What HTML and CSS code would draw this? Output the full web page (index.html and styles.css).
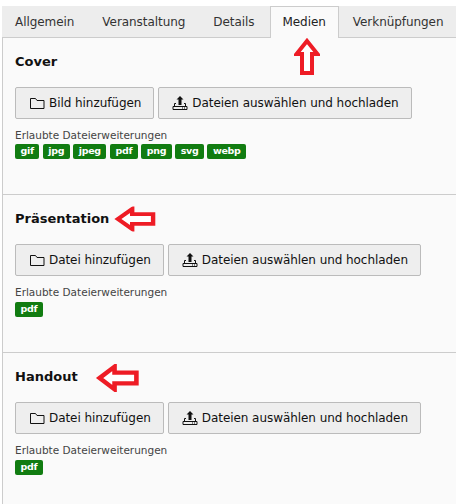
FILE: index.html
```html
<!DOCTYPE html>
<html>
<head>
  <meta charset="UTF-8">
  <link rel="stylesheet" href="styles.css">
</head>
<body>
  <svg width="0" height="0" class="defs">
    <symbol id="icon-folder" viewBox="0 0 16 16">
      <path d="M1.500 13.500v-10h5l1.500 2h7v8z" fill="none" stroke="#111" stroke-width="1"/>
    </symbol>
    <symbol id="icon-upload" viewBox="0 0 16 16">
      <path d="M8 1l3.500 3.500H9.500V10H6.500V4.500H4.500z" fill="#111"/>
      <path d="M4 8.500H2.500V11.500M12 8.500H13.500V11.500M1 11.500H15V14.500H1z" fill="none" stroke="#111"/>
      <path d="M10 13h1M12 13h1" stroke="#111"/>
    </symbol>
    <symbol id="arrow" viewBox="0 0 26 40" preserveAspectRatio="none">
      <path d="M13 4L23.500 17H18V36H8V17H2.500z" fill="#fff" stroke="#ee1c25" stroke-width="4"/>
    </symbol>
  </svg>

  <div class="tabs">
    <a class="tab tab-first">Allgemein</a>
    <a class="tab">Veranstaltung</a>
    <a class="tab tab-details">Details</a>
    <a class="tab active">Medien</a>
    <a class="tab">Verknüpfungen</a>
  </div>

  <div class="panel">
    <section class="group group-cover">
      <h4>Cover</h4>
      <div class="buttons">
        <button><svg class="icon"><use href="#icon-folder"/></svg>Bild hinzufügen</button>
        <button><svg class="icon"><use href="#icon-upload"/></svg>Dateien auswählen und hochladen</button>
      </div>
      <div class="hint">Erlaubte Dateierweiterungen</div>
      <div class="labels">
        <span class="label">gif</span>
        <span class="label">jpg</span>
        <span class="label">jpeg</span>
        <span class="label">pdf</span>
        <span class="label">png</span>
        <span class="label">svg</span>
        <span class="label">webp</span>
      </div>
    </section>

    <section class="group group-talk">
      <h4>Präsentation</h4>
      <div class="buttons">
        <button><svg class="icon"><use href="#icon-folder"/></svg>Datei hinzufügen</button>
        <button><svg class="icon"><use href="#icon-upload"/></svg>Dateien auswählen und hochladen</button>
      </div>
      <div class="hint">Erlaubte Dateierweiterungen</div>
      <div class="labels"><span class="label">pdf</span></div>
    </section>

    <section class="group group-handout">
      <h4>Handout</h4>
      <div class="buttons">
        <button><svg class="icon"><use href="#icon-folder"/></svg>Datei hinzufügen</button>
        <button><svg class="icon"><use href="#icon-upload"/></svg>Dateien auswählen und hochladen</button>
      </div>
      <div class="hint">Erlaubte Dateierweiterungen</div>
      <div class="labels"><span class="label">pdf</span></div>
    </section>
  </div>

  <!-- red marks drawn over the screenshot -->
  <svg class="mark mark-up"><use href="#arrow"/></svg>
  <svg class="mark mark-left mark-talk"><use href="#arrow"/></svg>
  <svg class="mark mark-left mark-handout"><use href="#arrow"/></svg>
</body>
</html>
```

FILE: styles.css
```css
html, body { margin: 0; padding: 0; background: #fff; }
body { position: relative; width: 456px; height: 504px; overflow: hidden; font-family: "DejaVu Sans", Verdana, sans-serif; font-size: 12px; letter-spacing: -0.06px; color: #111; }
.defs { position: absolute; }

.tabs { display: flex; margin: 6px 0 0 2px; height: 32px; background: #ededed; border-bottom: 1px solid #ccc; box-sizing: border-box; white-space: nowrap; }
.tab { padding: 8px 14px 0; line-height: 16px; color: #333; margin-right: 0; }
.tab-first { padding-left: 13px; }
.tab-details { padding-right: 15px; }
.active { background: #fafafa; border: 1px solid #ccc; border-bottom: 0; height: 32px; box-sizing: border-box; padding: 7px 12px 0; color: #222; }

.panel { margin-left: 2px; background: #fafafa; border-left: 1px solid #ccc; height: 466px; }
.group { padding: 0 0 0 12px; box-sizing: border-box; border-bottom: 1px solid #ccc; }
.group-cover { height: 157px; }
.group-talk { height: 158px; }
.group-handout { border-bottom: 0; }

h4 { margin: 0; font-size: 13px; line-height: 16px; font-weight: bold; letter-spacing: 0; color: #111; padding-top: 16px; }

.buttons { display: flex; gap: 4px; margin-top: 17px; }
button { display: flex; align-items: center; height: 32px; padding: 0 12px 0 13px; font: inherit; letter-spacing: inherit; color: #111; background: #eee; border: 1px solid #bbb; border-radius: 2px; white-space: nowrap; }
.icon { width: 16px; height: 16px; margin-right: 4px; flex: none; }

.hint { margin-top: 9px; font-size: 10.500px; line-height: 14px; letter-spacing: 0; color: #444; }
.labels { display: flex; gap: 3.500px; margin-top: 2px; }
.group-talk .labels, .group-handout .labels { margin-top: 3px; }
.label { padding: 0 5.500px; height: 15px; line-height: 14px; font-size: 9.500px; font-weight: bold; letter-spacing: -0.3px; color: #fff; background: #117c11; border-radius: 2px; }

.mark { position: absolute; width: 26px; height: 40px; overflow: visible; }
.mark-up { left: 294px; top: 37px; }
.mark-left { transform: rotate(-90deg); }
.mark-talk { width: 25px; height: 44px; left: 123px; top: 197px; }
.mark-handout { width: 28px; height: 46px; left: 104px; top: 355px; }
```
